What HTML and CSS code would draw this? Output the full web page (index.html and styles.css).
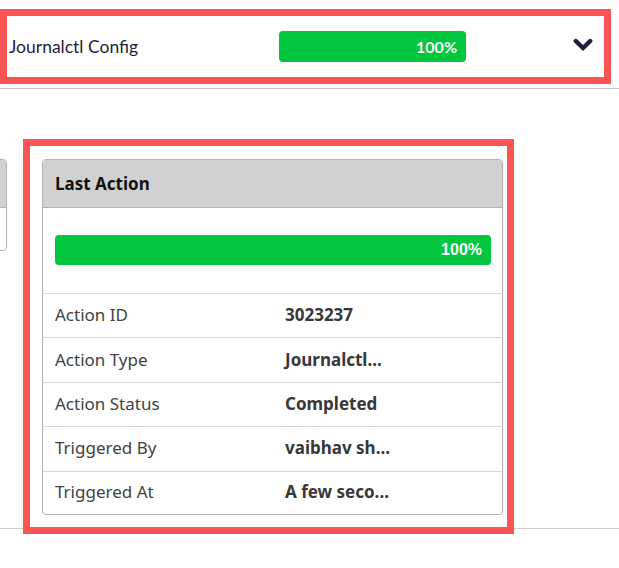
FILE: index.html
```html
<!DOCTYPE html>
<html>
<head>
<meta charset="utf-8">
<link rel="stylesheet" href="styles.css">
</head>
<body>
<div class="top">
  <div class="hl hl-top">
    <span class="title">Journalctl Config</span>
    <div class="bar bar-top"><span>100%</span></div>
    <svg class="chev" width="20" height="14" viewBox="0 0 20 14"><path d="M2.8 3 L10 10 L17.2 3" fill="none" stroke="#1f1f3a" stroke-width="4.4" stroke-linecap="round" stroke-linejoin="miter"/></svg>
  </div>
</div>
<div class="section">
  <div class="card ghost">
    <div class="card-head"></div>
  </div>
  <div class="hl hl-card">
    <div class="card">
      <div class="card-head">Last Action</div>
      <div class="card-body">
        <div class="bar bar-card"><span>100%</span></div>
      </div>
      <div class="row"><span class="lbl">Action ID</span><span class="val">3023237</span></div>
      <div class="row"><span class="lbl">Action Type</span><span class="val">Journalctl...</span></div>
      <div class="row"><span class="lbl">Action Status</span><span class="val">Completed</span></div>
      <div class="row"><span class="lbl">Triggered By</span><span class="val">vaibhav sh...</span></div>
      <div class="row"><span class="lbl">Triggered At</span><span class="val">A few seco...</span></div>
    </div>
  </div>
</div>
</body>
</html>
```

FILE: styles.css
```css
html, body {
  margin: 0;
  padding: 0;
  background: #fff;
  overflow: hidden;
}
body {
  width: 619px;
  height: 568px;
}
.top {
  padding: 9px 0 4px;
  border-bottom: 1px solid #c6c6c6;
}
.hl {
  border: 7px solid #fa5552;
  box-sizing: border-box;
}
.hl-top {
  width: 611px;
  height: 75px;
  display: flex;
  align-items: center;
  padding: 0 11px 0 2px;
}
.title {
  width: 270px;
  font-family: Lato, "Liberation Sans", sans-serif;
  font-size: 17.5px;
  color: #1f1f3a;
}
.bar {
  background: #00c73e;
  border-radius: 4px;
  display: flex;
  align-items: center;
  justify-content: flex-end;
  color: #fff;
  font-weight: bold;
  box-sizing: border-box;
}
.bar-top {
  width: 187px;
  height: 31px;
  padding-right: 9px;
  font-family: Lato, "Liberation Sans", sans-serif;
  font-size: 16px;
}
.chev {
  margin-left: auto;
  display: block;
  margin-top: -4px;
}
.section {
  display: flex;
  align-items: flex-start;
  border-bottom: 1px solid #cfcfcf;
}
.card {
  border: 1px solid #b3b3b3;
  border-radius: 4px;
  background: #fff;
  overflow: hidden;
  font-family: "Noto Sans", "Open Sans", sans-serif;
}
.ghost {
  flex: none;
  width: 200px;
  height: 92px;
  box-sizing: border-box;
  margin-left: -193px;
  margin-top: 70px;
}
.card-head {
  height: 48px;
  background: #d1d1d1;
  border-bottom: 1px solid #b3b3b3;
  box-sizing: border-box;
  display: flex;
  align-items: center;
  padding-left: 12px;
  font-weight: bold;
  font-size: 17px;
  color: #111;
}
.hl-card {
  flex: none;
  width: 491px;
  margin-left: 16px;
  margin-top: 50px;
  margin-bottom: -6px;
  padding: 13px 4px 12px 12px;
}
.card-body {
  padding: 27px 11px 28px 12px;
}
.bar-card {
  height: 30px;
  padding-right: 9px;
  font-family: "Liberation Sans", Arial, sans-serif;
  font-size: 16px;
}
.row {
  display: flex;
  align-items: center;
  height: 44.4px;
  box-sizing: border-box;
  border-top: 1px solid #d8d8d8;
  padding-left: 12px;
  font-size: 17px;
  padding-bottom: 2px;
}
.row:last-child {
  height: 43.5px;
}
.lbl {
  width: 230px;
  color: #424242;
}
.val {
  font-weight: bold;
  color: #383838;
}
```
